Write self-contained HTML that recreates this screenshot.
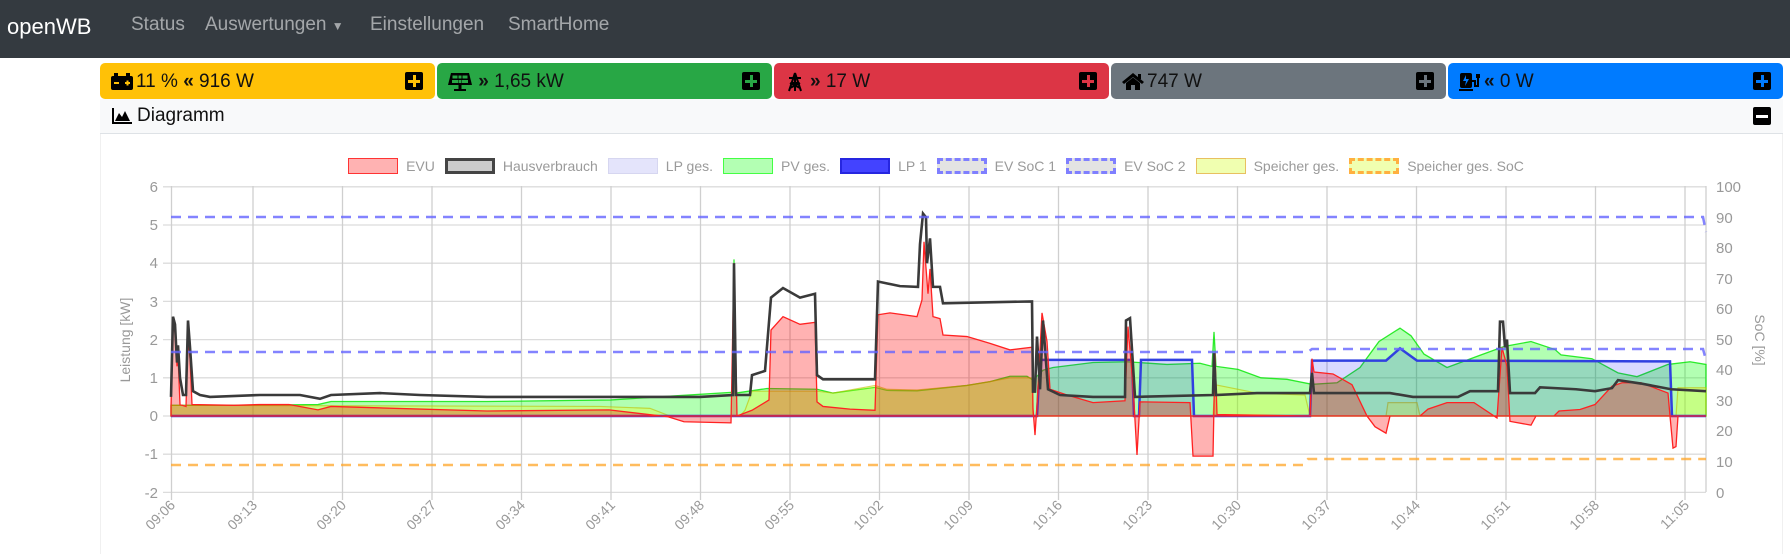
<!DOCTYPE html>
<html><head><meta charset="utf-8"><style>
*{box-sizing:border-box;margin:0;padding:0}
body{width:1790px;height:554px;overflow:hidden;background:#fff;font-family:"Liberation Sans",sans-serif;position:relative}
.nav{position:absolute;left:0;top:0;width:1790px;height:58px;background:#343a40}
.brand{position:absolute;left:7px;top:14px;color:#fff;font-size:22px}
.nl{position:absolute;top:14px;color:rgba(255,255,255,.55);font-size:19px}
.card{position:absolute;top:63px;height:36px;width:335px;border-radius:5px;font-size:19px;color:#111;padding:8px 0 0 36px}
.ic{position:absolute;left:11px;top:9px}
.pl{position:absolute;right:12px;top:9px;width:18px;height:18px;background:#000;border-radius:2px}
.pl:before{content:"";position:absolute;left:8px;top:3px;width:3px;height:12px;background:var(--c)}
.pl:after{content:"";position:absolute;left:3px;top:8px;width:12px;height:3px;background:var(--c)}
.hdr{position:absolute;left:100px;top:99px;width:1683px;height:35px;background:#f8f9fa;border-bottom:1px solid #dee2e6;font-size:19px;color:#111;padding:6px 0 0 37px}
.body{position:absolute;left:100px;top:134px;width:1683px;height:420px;border-left:1px solid #f0f0f0;border-right:1px solid #f0f0f0}
.leg{position:absolute;top:158px;left:0;width:1790px;display:flex;justify-content:center;padding-left:92px;font-size:14px;color:#9a9a9a}
.li{display:flex;align-items:center;margin-right:10px}
.bx{width:50px;height:16px;margin-right:8px}
</style></head><body>
<div class="nav"><div class="brand">openWB</div>
<div class="nl" style="left:131px">Status</div>
<div class="nl" style="left:205px">Auswertungen <span style="font-size:12px">&#9660;</span></div>
<div class="nl" style="left:370px">Einstellungen</div>
<div class="nl" style="left:508px">SmartHome</div></div>

<div class="card" style="left:100px;background:#ffc107"><svg class="ic" width="22" height="18" viewBox="0 0 22 18"><rect x="0" y="4" width="22" height="14" rx="2"/><rect x="3" y="1" width="4" height="3"/><rect x="15" y="1" width="4" height="3"/><rect x="3" y="10" width="5" height="2" fill="#ffc107"/><rect x="14" y="10" width="5" height="2" fill="#ffc107"/><rect x="15.5" y="8.5" width="2" height="5" fill="#ffc107"/></svg>11 % <b>&#171;</b> 916 W<div class="pl" style="--c:#ffc107"></div></div>
<div class="card" style="left:437px;background:#28a745"><svg class="ic" width="24" height="20" viewBox="0 0 24 20"><path d="M3 1h18l3 12H0z"/><path d="M4.5 3.5h5v3h-5zM10.5 3.5h3v3h-3zM14.5 3.5h5v3h-5zM4 8h6v3H4zM10.5 8h3v3h-3zM14 8h6v3h-6z" fill="#28a745"/><rect x="10.5" y="13" width="3" height="4"/><rect x="6" y="17" width="12" height="2"/></svg>&nbsp;<b>&#187;</b> 1,65 kW<div class="pl" style="--c:#28a745"></div></div>
<div class="card" style="left:774px;background:#dc3545"><svg class="ic" width="20" height="20" viewBox="0 0 20 20" fill="none" stroke="#000" stroke-width="2"><path d="M10 1L4 19M10 1l6 18M4 6h12M6 11h8M10 1v18M5 16l10-5M15 16L5 11"/></svg><b>&#187;</b> 17 W<div class="pl" style="--c:#dc3545"></div></div>
<div class="card" style="left:1111px;background:#6c757d"><svg class="ic" width="22" height="18" viewBox="0 0 22 18"><path d="M11 1L0 10l2 2 9-7 9 7 2-2z"/><path d="M4 11l7-5.5 7 5.5v7h-5v-5h-4v5H4z"/><rect x="16" y="2" width="3" height="5"/></svg>747 W<div class="pl" style="--c:#6c757d"></div></div>
<div class="card" style="left:1448px;width:335px;background:#007bff"><svg class="ic" width="24" height="20" viewBox="0 0 24 20"><rect x="1" y="1" width="12" height="15" rx="2"/><path d="M7 3l-3 6h3l-1 5 4-7H7z" fill="#007bff"/><rect x="0" y="17" width="14" height="2"/><path d="M13 9h3v5h3V5" fill="none" stroke="#000" stroke-width="2"/><rect x="17" y="2" width="4" height="4"/></svg><b>&#171;</b> 0 W<div class="pl" style="--c:#007bff"></div></div>

<div class="hdr"><svg style="position:absolute;left:12px;top:9px" width="20" height="16" viewBox="0 0 20 16"><path d="M0 0h2v14h18v2H0z"/><path d="M3 13l4-8 3 4 3-6 5 10z"/></svg>Diagramm<div style="position:absolute;right:12px;top:8px;width:18px;height:18px;background:#000;border-radius:2px"><div style="position:absolute;left:3px;top:8px;width:12px;height:3px;background:#fff"></div></div></div>
<div class="body"></div>

<div class="leg">
<div class="li"><div class="bx" style="background:rgba(255,0,0,.3);border:1.5px solid #f33"></div>EVU</div>
<div class="li"><div class="bx" style="background:#ccc;border:3px solid #444"></div>Hausverbrauch</div>
<div class="li"><div class="bx" style="background:#e4e4fb;border:1.5px solid #d6d6f0"></div>LP ges.</div>
<div class="li"><div class="bx" style="background:#b3ffb3;border:1.5px solid #4f4"></div>PV ges.</div>
<div class="li"><div class="bx" style="background:#4343ff;border:2px solid #2626e0"></div>LP 1</div>
<div class="li"><div class="bx" style="background:#e3e3e3;border:3px dashed #7f7fff"></div>EV SoC 1</div>
<div class="li"><div class="bx" style="background:#e3e3e3;border:3px dashed #7f7fff"></div>EV SoC 2</div>
<div class="li"><div class="bx" style="background:#f0ffb0;border:1.5px solid #e8c060"></div>Speicher ges.</div>
<div class="li"><div class="bx" style="background:#f0ffb0;border:3px dashed #ffb040"></div>Speicher ges. SoC</div>
</div>

<svg style="position:absolute;left:0;top:0" width="1790" height="554">
<g stroke="#dcdcdc" stroke-width="1.3">
<path d="M163 186.8H1706M163 225H1706M163 263.2H1706M163 301.4H1706M163 339.6H1706M163 377.8H1706M163 416H1706M163 454.2H1706M163 492.4H1706"/>
</g>
<g stroke="#cfcfcf" stroke-width="1.3">
<path d="M171.5 186V500M253 186V500M342.5 186V500M432 186V500M521.5 186V500M611 186V500M700.5 186V500M790 186V500M879.5 186V500M969 186V500M1058.5 186V500M1148 186V500M1237.5 186V500M1327 186V500M1416.5 186V500M1506 186V500M1595.5 186V500M1685 186V500M1706 186V492"/>
</g>
<g font-size="15" fill="#999" text-anchor="end">
<text x="158" y="192">6</text><text x="158" y="230">5</text><text x="158" y="268">4</text><text x="158" y="307">3</text><text x="158" y="345">2</text><text x="158" y="383">1</text><text x="158" y="421">0</text><text x="158" y="459">-1</text><text x="158" y="498">-2</text>
</g>
<g font-size="15" fill="#999">
<text x="1716" y="192">100</text><text x="1716" y="223">90</text><text x="1716" y="253">80</text><text x="1716" y="284">70</text><text x="1716" y="314">60</text><text x="1716" y="345">50</text><text x="1716" y="375">40</text><text x="1716" y="406">30</text><text x="1716" y="436">20</text><text x="1716" y="467">10</text><text x="1716" y="498">0</text>
</g>
<text transform="translate(130,340) rotate(-90)" font-size="14" fill="#999" text-anchor="middle">Leistung [kW]</text>
<text transform="translate(1755,340) rotate(90)" font-size="14" fill="#999" text-anchor="middle">SoC [%]</text>
<g font-size="14" fill="#999" text-anchor="end">
<text transform="translate(176,506) rotate(-45)">09:06</text>
<text transform="translate(258,506) rotate(-45)">09:13</text>
<text transform="translate(347,506) rotate(-45)">09:20</text>
<text transform="translate(437,506) rotate(-45)">09:27</text>
<text transform="translate(526,506) rotate(-45)">09:34</text>
<text transform="translate(616,506) rotate(-45)">09:41</text>
<text transform="translate(705,506) rotate(-45)">09:48</text>
<text transform="translate(795,506) rotate(-45)">09:55</text>
<text transform="translate(884,506) rotate(-45)">10:02</text>
<text transform="translate(974,506) rotate(-45)">10:09</text>
<text transform="translate(1063,506) rotate(-45)">10:16</text>
<text transform="translate(1153,506) rotate(-45)">10:23</text>
<text transform="translate(1242,506) rotate(-45)">10:30</text>
<text transform="translate(1332,506) rotate(-45)">10:37</text>
<text transform="translate(1421,506) rotate(-45)">10:44</text>
<text transform="translate(1511,506) rotate(-45)">10:51</text>
<text transform="translate(1600,506) rotate(-45)">10:58</text>
<text transform="translate(1690,506) rotate(-45)">11:05</text>
</g>
<g transform="translate(0,416) scale(1,-38.2)">
<path vector-effect="non-scaling-stroke" fill="rgba(0,255,0,0.3)" stroke="rgba(0,230,0,0.8)" stroke-width="1.3" d="M171 0L171,0.28 234,0.28 318,0.3 331,0.38 487,0.38 611,0.42 676,0.53 733,0.62 734,4.1 736,0.6 767,0.72 817,0.7 833,0.6 875,0.75 887,0.67 917,0.66 967,0.8 990,0.9 1010,1.04 1027,1.04 1033,0.94 1043,1.2 1053,1.27 1093,1.4 1127,1.42 1167,1.35 1200,1.38 1212,1.3 1214,2.2 1216,1.3 1238,1.22 1261,1.0 1287,0.96 1312,0.83 1337,0.87 1360,1.27 1379,1.95 1400,2.3 1411,2.1 1424,1.62 1447,1.27 1478,1.57 1504,1.82 1531,1.95 1555,1.74 1561,1.6 1592,1.5 1618,1.13 1637,1.03 1668,1.35 1690,1.42 1706,1.35L1706 0Z"/>
<path vector-effect="non-scaling-stroke" fill="rgba(255,255,0,0.25)" stroke="rgba(190,190,0,0.6)" stroke-width="1.2" d="M171 0L171,0.28 600,0.25 650,0.2 670,0 740,0 745,0.15 752,0.65 817,0.65 833,0.6 875,0.8 887,0.7 917,0.68 967,0.8 990,0.9 1010,1.0 1032,1.0 1033,0 1213,0 1215,0.82 1257,0.6 1305,0.55 1310,0 1386,0 1388,0.35 1417,0.35 1420,0 1676,0 1678,0.74 1706,0.74L1706 0Z"/>
<path vector-effect="non-scaling-stroke" fill="rgba(0,0,255,0.15)" stroke="#3040e0" stroke-width="2.5" d="M171,0 1037,0 1040,1.47 1132,1.47 1134,0 1139,0 1141,1.47 1192,1.47 1194,0 1310,0 1312,1.45 1386,1.45 1400,1.77 1417,1.45 1670,1.43 1672,0 1706,0"/>
<path vector-effect="non-scaling-stroke" fill="rgba(255,0,0,0.3)" stroke="#f22" stroke-width="1.3" d="M171 0L171,0.25 173,2.3 175,2.2 177,1.3 178,1.6 180,0.3 186,0.25 188,2.1 190,1.5 192,0.3 234,0.28 259,0.3 289,0.3 318,0.16 331,0.25 487,0.13 609,0.16 668,-0.02 684,-0.15 731,-0.18 734,4.0 737,0 752,0.15 769,0.42 771,2.25 783,2.6 800,2.4 815,2.45 817,0.37 823,0.25 850,0.18 875,0.15 878,2.65 890,2.7 917,2.6 922,3.04 924,4.56 928,3.2 930,3.85 933,2.6 940,2.55 943,2.12 967,2.08 990,1.9 1010,1.73 1032,1.8 1033,0.2 1035,-0.5 1037,0.3 1042,2.7 1047,1.95 1050,0.7 1067,0.55 1093,0.35 1125,0.4 1128,2.34 1133,0.8 1137,-1.02 1140,0.37 1190,0.35 1193,-1.05 1213,-1.05 1215,1.65 1217,0.04 1310,0 1312,1.5 1314,1.15 1333,1.1 1352,0.82 1367,0 1375,-0.28 1386,-0.45 1390,0 1420,0 1428,0.18 1447,0.35 1474,0.35 1497,-0.05 1502,1.8 1507,1.3 1510,-0.14 1531,-0.24 1536,0 1554,0 1559,0.13 1580,0.17 1595,0.3 1612,0.78 1622,0.87 1641,0.87 1668,0.6 1670,0 1673,-0.84 1676,-0.8 1678,0 1706,0Z"/>
<path vector-effect="non-scaling-stroke" fill="none" stroke="#3a3a3a" stroke-width="2.6" d="M171,0.5 173,2.6 175,2.4 177,1.4 178,1.85 180,1.0 183,0.55 186,0.55 188,2.5 190,1.8 193,0.65 200,0.55 210,0.5 260,0.55 300,0.55 320,0.45 331,0.55 380,0.6 420,0.55 487,0.5 610,0.5 700,0.5 733,0.55 734,4.0 736,0.55 750,0.55 752,1.07 765,1.18 771,3.1 783,3.35 800,3.1 815,3.2 817,1.07 823,0.96 875,0.96 878,3.52 900,3.4 918,3.38 920,4.5 923,5.3 926,5.2 927,4.0 930,4.65 933,3.38 940,3.38 943,2.95 1032,3.0 1033,0.64 1035,0.64 1037,2.08 1040,0.7 1043,2.5 1048,0.7 1060,0.55 1093,0.5 1125,0.5 1126,2.5 1130,2.56 1135,0.5 1213,0.55 1214,1.65 1216,0.55 1257,0.6 1310,0.6 1312,1.13 1314,0.6 1390,0.6 1413,0.5 1458,0.5 1470,0.65 1498,0.65 1500,2.47 1503,2.47 1505,1.8 1507,2.0 1510,0.6 1535,0.6 1540,0.75 1576,0.7 1595,0.65 1612,0.73 1618,0.94 1641,0.85 1671,0.7 1706,0.65"/>
</g>
<g fill="none" stroke-width="2.5" stroke-dasharray="10,7">
<path stroke="rgba(100,100,255,0.8)" d="M171 217H1703L1706 232"/>
<path stroke="rgba(100,100,255,0.8)" d="M171 352H1308L1312 349H1703L1706 360"/>
<path stroke="rgba(255,165,40,0.75)" d="M171 465H1303L1308 459H1706"/>
</g>
</svg>
</body></html>
